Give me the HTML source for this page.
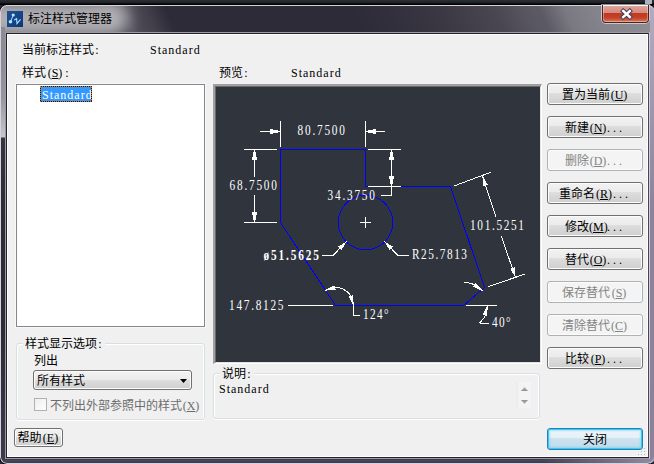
<!DOCTYPE html>
<html lang="zh-CN">
<head>
<meta charset="utf-8">
<title>标注样式管理器</title>
<style>
*{box-sizing:border-box;margin:0;padding:0}
html,body{width:654px;height:464px;overflow:hidden;background:#2e2b38}
body{position:relative;font-family:"Liberation Serif","Noto Sans CJK SC",sans-serif;font-size:12px;line-height:12px;color:#000}
.abs{position:absolute}
.t{position:absolute;white-space:nowrap;height:12px;line-height:12px;margin-top:1px}
.l{letter-spacing:1px}
.p{letter-spacing:1.1px}
.p4{letter-spacing:.443px}.p7{letter-spacing:.667px}.p9{letter-spacing:.891px}.p11{letter-spacing:1.109px}.pm{letter-spacing:-.224px}.d{letter-spacing:3px}.c{display:inline-block;width:6px;text-align:center}.k{display:inline-block;width:18px;text-align:center}
/* ---------- window frame ---------- */
#desk{left:0;top:0;width:654px;height:5px;background:linear-gradient(#2b2f36 0,#272a30 1px,#22252a 2px,#1c1e22 3px,#000 4px,#000 5px)}
#deskr{left:645px;top:0;width:7px;height:4px;background:#a9b4bf}
#win{left:-1px;top:4px;width:657px;height:461px;border:1px solid #000;border-radius:8px 8px 8px 8px;background:#2e2b38;overflow:hidden}
#glass{left:0;top:0;width:655px;height:28px;background:
 linear-gradient(65deg,rgba(255,255,255,0) 0,rgba(255,255,255,0) 54%,rgba(255,255,255,.025) 60%,rgba(255,255,255,.057) 66.8%,rgba(255,255,255,.134) 75.8%,rgba(255,255,255,.20) 80%,rgba(255,255,255,.225) 82.5%,rgba(255,255,255,.364) 86.2%,rgba(255,255,255,.416) 90.8%,rgba(255,255,255,.46) 97.5%,rgba(255,255,255,.48) 100%)}
#glow{left:-40px;top:-5px;width:168px;height:38px;border-radius:19px;background:rgba(255,255,255,.62);filter:blur(8px)}
#glow2{left:100px;top:-4px;width:70px;height:36px;background:linear-gradient(90deg,rgba(255,255,255,0),rgba(255,255,255,.16) 40%,rgba(255,255,255,.10) 70%,rgba(255,255,255,0));transform:skewX(25deg)}
#rim{left:0;top:0;width:654px;height:459px;border:1px solid #d4d4d8;border-radius:7px;border-right:none;pointer-events:none}
#fl{left:1px;top:22px;width:4px;height:436px;background:linear-gradient(#8c8a96 0,#8e8c98 40px,#9896a2 72px,#c6c6ce 110px,#363344 111px,#2e2c3a 170px,#2c2a38 300px,#3c3a4c 430px)}
#fr{left:650px;top:0;width:5px;height:459px;background:linear-gradient(#b0abc0 0,#aaa5b8 40px,#8d8499 200px,#8b8297 100%)}
#fb{left:1px;top:454px;width:653px;height:4px;background:linear-gradient(90deg,rgba(144,136,160,0) 0,rgba(144,136,160,0) 540px,rgba(144,136,160,.55) 600px,rgba(144,136,160,1) 648px),linear-gradient(#36334a 0,#444254 1px,#484658 2px,#3e3c50 3px,#3e3c50 4px)}
#in1{left:5px;top:27px;width:645px;height:427px;border:1px solid #9c9aa6;border-right-color:#cfcbdb}
#in2{left:6px;top:28px;width:643px;height:425px;border:1px solid #24222a;border-right-color:#4a4656}
#client{left:7px;top:34px;width:641px;height:423px;background:#f0f0f0;border:1px solid #fff}
#title{left:28px;top:12px;font-family:"Liberation Sans","Noto Sans CJK SC",sans-serif}
/* close */
#cls{left:602px;top:5px;width:47px;height:18px;border-radius:0 0 4px 4px;border:1px solid #4b2320;border-top:none;box-shadow:0 0 0 1px rgba(255,255,255,.55);background:linear-gradient(#e0a79f 0,#d58b80 45%,#c03a22 50%,#c5412a 75%,#d97a5e 100%)}
#cls:before{content:"";position:absolute;left:0;top:0;right:0;bottom:0;border-radius:0 0 3px 3px;box-shadow:inset 0 1px 0 rgba(255,255,255,.85),inset 0 0 0 1px rgba(255,255,255,.35)}
/* ---------- controls ---------- */
.btn{position:absolute;width:96px;height:22px;border:1px solid #707070;border-radius:3px;background:linear-gradient(#f2f2f2 0,#ebebeb 44%,#dddddd 48%,#cfcfcf 100%);box-shadow:inset 0 0 0 1px #fcfcfc;text-align:center;line-height:22px;white-space:nowrap}
.btn.dis{border-color:#adb2b5;background:#f4f4f4;color:#838383}
.btn.def{border-color:#2c7db4;background:linear-gradient(#f0f6fb 0,#e5eff6 44%,#cde3ef 48%,#c0dbe9 100%);box-shadow:inset 0 0 0 1px #35cbf6,inset 0 0 2px 2px rgba(80,210,248,.45)}
.grp{position:absolute;border:1px solid #d5dfe5;border-radius:3px;box-shadow:inset 1px 1px 0 #fff,inset -1px 0 0 #fff,0 1px 0 #fff}
.gl{position:absolute;background:#f0f0f0;height:12px;white-space:nowrap;padding:0 2px;margin-top:1px}
#list{left:16px;top:84px;width:189px;height:243px;background:#fff;border:1px solid #828790;box-shadow:0 0 0 1px #f8f8f8}
#sel{left:40px;top:86px;width:52px;height:16px;background:#3399ff;color:#fff;padding:3px 0 0 2px}
#sel:after{content:"";position:absolute;left:0;top:0;right:0;bottom:0;background:
 repeating-linear-gradient(90deg,#d4752a 0,#d4752a 1px,#1a1a1a 1px,#1a1a1a 2px) 0 0/100% 1px no-repeat,
 repeating-linear-gradient(90deg,#d4752a 0,#d4752a 1px,#1a1a1a 1px,#1a1a1a 2px) 0 100%/100% 1px no-repeat,
 repeating-linear-gradient(0deg,#d4752a 0,#d4752a 1px,#1a1a1a 1px,#1a1a1a 2px) 0 0/1px 100% no-repeat,
 repeating-linear-gradient(0deg,#d4752a 0,#d4752a 1px,#1a1a1a 1px,#1a1a1a 2px) 100% 0/1px 100% no-repeat}
#pv{left:213px;top:84px;width:329px;height:280px;background:#2f343d;border-style:solid;border-width:2px 1px 1px 2px;border-color:#a0a0a0 #fff #fff #a0a0a0}
#pv2{left:215px;top:86px;width:326px;height:277px;border-style:solid;border-width:1px;border-color:#696969 #e3e3e3 #e3e3e3 #696969}
#combo{left:33px;top:370px;width:159px;height:20px;border:1px solid #707070;border-radius:3px;background:linear-gradient(#f2f2f2 0,#ebebeb 48%,#dddddd 52%,#cfcfcf 100%);box-shadow:inset 0 0 0 1px #fcfcfc}
#chk{left:34px;top:398px;width:13px;height:13px;border:1px solid #b1b1b1;background:linear-gradient(135deg,#eeeeee,#f8f8f8 60%,#fcfcfc)}
#sb{left:516px;top:382px;width:15px;height:26px;background:linear-gradient(90deg,#e9e9e9 0,#f3f3f3 3px,#f4f4f4 100%)}
</style>
</head>
<body>
<div class="abs" id="desk"></div>
<div class="abs" id="deskr"></div>
<div class="abs" id="win">
  <div class="abs" id="glass"></div>
  <div class="abs" id="glow2"></div>
  <div class="abs" id="glow"></div>
  <div class="abs" id="fl"></div>
  <div class="abs" id="fr"></div>
  <div class="abs" id="fb"></div>
  <div class="abs" id="in1"></div>
  <div class="abs" id="in2"></div>
  <div class="abs" id="rim"></div>
</div>
<svg class="abs" style="left:7px;top:11px" width="16" height="16" viewBox="0 0 16 16">
  <defs><linearGradient id="ig" x1="0" y1="0" x2="1" y2="1"><stop offset="0" stop-color="#1b4f94"/><stop offset=".5" stop-color="#164688"/><stop offset="1" stop-color="#0d3570"/></linearGradient></defs>
  <rect width="16" height="16" fill="url(#ig)"/>
  <path d="M6.2 4.2 L3.6 10.6" stroke="#a8dcff" stroke-width="1" fill="none"/>
  <circle cx="6.2" cy="4" r="1.6" fill="#b8e6ff"/><circle cx="3.5" cy="10.8" r="1.8" fill="#b8e6ff"/>
  <path d="M7.2 9 L9.6 7.8 L10 12.6 L13.6 8.4" stroke="#a8dcff" stroke-width="1.2" fill="none"/>
</svg>
<div class="t" id="title">标注样式管理器</div>
<div class="abs" id="cls"></div>
<svg class="abs" style="left:620px;top:8px" width="13" height="12" viewBox="0 0 13 12">
  <path d="M3.2 3 L9.8 9 M9.8 3 L3.2 9" stroke="#3b4058" stroke-width="4.4" stroke-linecap="square"/>
  <path d="M3.2 3 L9.8 9 M9.8 3 L3.2 9" stroke="#fff" stroke-width="2.4" stroke-linecap="square"/>
</svg>

<div class="abs" id="client"></div>

<div class="t" style="left:22px;top:43px">当前标注样式<span class="c">:</span></div>
<div class="t l" style="left:150px;top:43px">Standard</div>
<div class="t" style="left:22px;top:66px">样式<span class="k">(<u>S</u>)</span><span class="c">:</span></div>
<div class="t" style="left:219px;top:66px">预览<span class="c">:</span></div>
<div class="t l" style="left:291px;top:66px">Standard</div>

<div class="abs" id="list"></div>
<div class="abs l" id="sel">Standard</div>

<div class="abs" id="pv"></div>
<div class="abs" id="pv2"></div>
<svg class="abs" style="left:216px;top:87px" width="324" height="275" viewBox="216 87 324 275" font-family="'Liberation Serif',serif" font-size="13.8">
<g fill="none" stroke="#0000ff" stroke-width="1" shape-rendering="crispEdges">
<polygon points="280.5,149.5 365.5,149.5 365.5,186.5 450.5,186.5 484.5,287.5 463.5,305.5 335.5,305.5 280.5,222.5"/>
<polygon points="392.8,222.5 392.3,227.8 390.7,232.9 388.2,237.7 384.8,241.8 380.7,245.2 375.9,247.7 370.8,249.3 365.5,249.8 360.2,249.3 355.1,247.7 350.3,245.2 346.2,241.8 342.8,237.7 340.3,232.9 338.7,227.8 338.2,222.5 338.7,217.2 340.3,212.1 342.8,207.3 346.2,203.2 350.3,199.8 355.1,197.3 360.2,195.7 365.5,195.2 370.8,195.7 375.9,197.3 380.7,199.8 384.8,203.2 388.2,207.3 390.7,212.1 392.3,217.2"/>
</g>
<g fill="none" stroke="#fff" stroke-width="1" shape-rendering="crispEdges">
<path d="M280.5 121V147M365.5 121V147M260 131.5H280M366 131.5H385"/>
<path d="M244 149.5H277M244 222.5H277M254.5 150V177M254.5 195V222"/>
<path d="M368 149.5H401M368 186.5H401M391.5 150V195.5H381"/>
<path d="M360 222.5H371M365.5 217V228"/>
<path d="M288 305.5H333M353.5 305V315.5H360M466 305.5H497M479.5 323.5H489"/>
<path d="M322 255.5H333M398 255.5H409"/>
</g>
<g fill="none" stroke="#fff" stroke-width="1" shape-rendering="crispEdges">
<path d="M333 255.5L346.7 241.3M398 255.5L384.3 241.3"/>
<path d="M454 186L491 172.2M488.2 286.6L525.3 274"/>
<path d="M482.5 176L495.8 216.5M501.3 236L515.5 277.5"/>
<polyline points="353.5,305.5 353.2,302.3 352.3,299.1 350.9,296.2 349.0,293.6 346.7,291.4 344.0,289.6 341.0,288.3 337.8,287.6 334.6,287.5 331.3,288.0 328.3,289.0 325.4,290.6"/>
<polyline points="482.2,290.9 480.5,288.9 478.5,287.2 476.3,285.7 473.9,284.5 471.5,283.6 468.9,282.9 466.3,282.6 463.7,282.5"/>
<polyline points="487.5,305.5 487.4,308.0 487.0,310.5 486.3,312.9 485.3,315.2 484.2,317.4 482.7,319.5 481.1,321.4 479.3,323.1"/>
</g>
<g fill="#fff" stroke="none" shape-rendering="crispEdges">
<path d="M270 129h3v1h5v3h-5v1h-3z"/>
<path d="M376 129h-3v1h-5v3h5v1h3z"/>
<path d="M252 160v-3h1v-5h3v5h1v3z"/>
<path d="M252 212v3h1v5h3v-5h1v-3z"/>
<path d="M389 160v-3h1v-5h3v5h1v3z"/>
<path d="M389 176v3h1v5h3v-5h1v-3z"/>
<polygon points="482.5,176.0 487.9,184.8 483.3,186.3"/>
<polygon points="515.5,277.5 510.1,268.7 514.7,267.2"/>
<polygon points="346.7,241.3 341.4,250.1 338.0,246.8"/>
<polygon points="384.3,241.3 393.0,246.8 389.6,250.1"/>
<polygon points="325.4,290.6 334.2,285.2 335.7,289.8"/>
<polygon points="353.5,305.5 348.5,296.5 353.1,295.2"/>
<polygon points="482.2,290.9 472.8,286.7 475.8,282.9"/>
<polygon points="487.5,305.5 487.4,315.8 482.7,314.6"/>
</g>
<g fill="#fff" stroke="none">
<text transform="translate(297.5 135) scale(0.82 1)" textLength="57.9">80.7500</text>
<text transform="translate(229.5 190) scale(0.82 1)" textLength="57.9">68.7500</text>
<text transform="translate(327.5 200) scale(0.82 1)" textLength="57.9">34.3750</text>
<text transform="translate(263.5 260) scale(0.82 1)" textLength="67.7" font-weight="bold">ø51.5625</text>
<text transform="translate(412 259) scale(0.82 1)" textLength="67.1">R25.7813</text>
<text transform="translate(470 230) scale(0.82 1)" textLength="65.9">101.5251</text>
<text transform="translate(229 310) scale(0.82 1)" textLength="66.5">147.8125</text>
<text transform="translate(363 319) scale(0.82 1)" textLength="31.1">124°</text>
<text transform="translate(492 327) scale(0.82 1)" textLength="22.6">40°</text>
</g>
</svg>

<div class="btn" style="left:547px;top:83px">置为当前<span class="k">(<u>U</u>)</span></div>
<div class="btn" style="left:547px;top:116px">新建<span class="k">(<u>N</u>)</span><span class="d">...</span></div>
<div class="btn dis" style="left:547px;top:149px">删除<span class="k">(<u>D</u>)</span><span class="d">...</span></div>
<div class="btn" style="left:547px;top:182px">重命名<span class="k">(<u>R</u>)</span><span class="d">...</span></div>
<div class="btn" style="left:547px;top:215px">修改<span class="k">(<u>M</u>)</span><span class="d">...</span></div>
<div class="btn" style="left:547px;top:248px">替代<span class="k">(<u>O</u>)</span><span class="d">...</span></div>
<div class="btn dis" style="left:547px;top:281px">保存替代<span class="k">(<u>S</u>)</span></div>
<div class="btn dis" style="left:547px;top:314px">清除替代<span class="k">(<u>C</u>)</span></div>
<div class="btn" style="left:547px;top:347px">比较<span class="k">(<u>P</u>)</span><span class="d">...</span></div>

<div class="grp" style="left:16px;top:343px;width:189px;height:77px"></div>
<div class="gl" style="left:23px;top:337px">样式显示选项<span class="c">:</span></div>
<div class="t" style="left:34px;top:354px">列出</div>
<div class="abs" id="combo"></div>
<div class="t" style="left:37px;top:374px">所有样式</div>
<svg class="abs" style="left:180px;top:379px" width="7" height="4"><path d="M0 0H7L3.5 4Z" fill="#000"/></svg>
<div class="abs" id="chk"></div>
<div class="t" style="left:50px;top:399px;color:#6d6d6d">不列出外部参照中的样式<span class="k">(<u>X</u>)</span></div>

<div class="grp" style="left:213px;top:373px;width:327px;height:46px"></div>
<div class="gl" style="left:220px;top:367px">说明<span class="c">:</span></div>
<div class="t l" style="left:219px;top:382px">Standard</div>
<div class="abs" id="sb"></div>
<svg class="abs" style="left:520px;top:386px" width="9" height="19"><defs><linearGradient id="ag" x1="0" y1="0" x2="0" y2="1"><stop offset="0" stop-color="#8e8e8e"/><stop offset="1" stop-color="#bdbdbd"/></linearGradient><linearGradient id="ag2" x1="0" y1="0" x2="0" y2="1"><stop offset="0" stop-color="#bdbdbd"/><stop offset="1" stop-color="#8e8e8e"/></linearGradient></defs><path d="M4.5 1L8 5H1Z" fill="url(#ag2)"/><path d="M1 14H8L4.5 18Z" fill="url(#ag)"/></svg>

<div class="btn" style="left:14px;top:428px;width:49px;height:19px;line-height:19px">帮助<span class="k">(<u>E</u>)</span></div>
<div class="btn def" style="left:547px;top:428px">关闭</div>
<svg class="abs" style="left:636px;top:446px" width="10" height="10" shape-rendering="crispEdges">
<g fill="#fff"><rect x="7" y="1" width="1" height="1"/><rect x="4" y="4" width="1" height="1"/><rect x="7" y="4" width="1" height="1"/><rect x="1" y="7" width="1" height="1"/><rect x="4" y="7" width="1" height="1"/><rect x="7" y="7" width="1" height="1"/></g>
<g fill="#b8b8b8"><rect x="8" y="2" width="1" height="1"/><rect x="5" y="5" width="1" height="1"/><rect x="8" y="5" width="1" height="1"/><rect x="2" y="8" width="1" height="1"/><rect x="5" y="8" width="1" height="1"/><rect x="8" y="8" width="1" height="1"/></g>
</svg>
</body>
</html>
